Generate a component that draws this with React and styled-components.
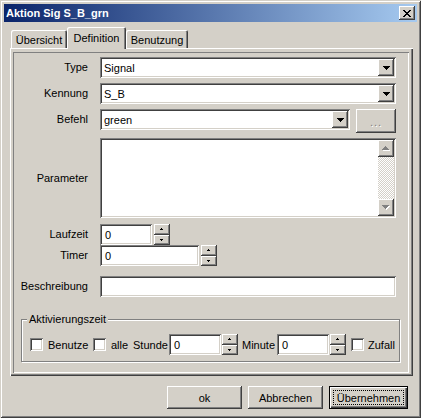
import React from "react";
import styled, { createGlobalStyle, css } from "styled-components";

const FACE = "#d4d0c8";

const raisedEdge = css`
  box-shadow: inset -1px -1px #404040, inset 1px 1px #ffffff, inset -2px -2px #808080;
`;

const sunkenEdge = css`
  box-shadow: inset 1px 1px #808080, inset -1px -1px #ffffff, inset 2px 2px #404040,
    inset -2px -2px ${FACE};
`;

const GlobalStyle = createGlobalStyle`
  html, body {
    margin: 0;
    padding: 0;
    background: ${FACE};
  }
  body {
    font-family: "Liberation Sans", Arial, sans-serif;
    font-size: 11px;
    color: #000;
  }
  * {
    box-sizing: border-box;
  }
`;

const Window = styled.div`
  width: 421px;
  height: 418px;
  padding: 4px;
  background: ${FACE};
  display: flex;
  flex-direction: column;
  box-shadow: inset 1px 1px ${FACE}, inset -1px -1px #404040, inset 2px 2px #fff,
    inset -2px -2px #808080;
`;

const TitleBar = styled.div`
  height: 18px;
  flex-shrink: 0;
  display: flex;
  align-items: center;
  justify-content: space-between;
  padding: 0 2px;
  background: linear-gradient(to right, #0a246a, #a6caf0);
  color: #fff;
  font-weight: bold;
  white-space: nowrap;
`;

const CloseButton = styled.div`
  width: 16px;
  height: 14px;
  background: ${FACE};
  ${raisedEdge};
  display: flex;
  align-items: center;
  justify-content: center;
  padding-right: 1px;
`;

const Client = styled.div`
  flex: 1;
  display: flex;
  flex-direction: column;
  padding: 5px 4px 0 6px;
`;

const TabStrip = styled.div`
  height: 21px;
  display: flex;
  align-items: flex-end;
  padding-left: 1px;
`;

const Tab = styled.div`
  position: relative;
  z-index: ${(p) => (p.$active ? 1 : 0)};
  width: ${(p) => p.$w}px;
  height: ${(p) => (p.$active ? 22 : 18)}px;
  margin-bottom: ${(p) => (p.$active ? -1 : 0)}px;
  padding-top: ${(p) => (p.$active ? 4 : 3)}px;
  line-height: 14px;
  text-align: center;
  background: ${FACE};
  border-radius: 2px 2px 0 0;
  box-shadow: inset 1px 1px #fff, inset -1px 0 #404040, inset -2px 0 #808080;
  white-space: nowrap;
`;

const TabPanel = styled.div`
  height: 328px;
  display: flex;
  padding: 4px 4px 3px 3px;
  box-shadow: inset 1px 1px #fff, inset -1px -1px #404040, inset -2px -2px #808080;
`;

const PagePanel = styled.div`
  flex: 1;
  display: flex;
  flex-direction: column;
  box-shadow: inset 1px 1px #808080, inset -1px -1px #fff;
`;

const Row = styled.div`
  display: flex;
  align-items: ${(p) => p.$align || "center"};
  margin-top: ${(p) => p.$mt}px;
  padding: 0 13px 0 2px;
`;

const Label = styled.div`
  width: 73px;
  margin-right: 12px;
  flex-shrink: 0;
  text-align: right;
  line-height: 21px;
  white-space: nowrap;
  align-self: ${(p) => (p.$middle ? "center" : "flex-start")};
`;

const Edit = styled.div`
  height: 21px;
  width: ${(p) => (p.$w ? `${p.$w}px` : "auto")};
  flex: ${(p) => (p.$w ? "none" : 1)};
  display: flex;
  align-items: center;
  padding: 0 2px 0 5px;
  background: #fff;
  ${sunkenEdge};
  white-space: nowrap;
`;

const Combo = styled.div`
  height: 21px;
  flex: 1;
  display: flex;
  align-items: center;
  padding: 2px 2px 2px 4px;
  background: #fff;
  ${sunkenEdge};
`;

const ComboText = styled.span`
  flex: 1;
`;

const DropButton = styled.div`
  width: 16px;
  height: 17px;
  background: ${FACE};
  ${raisedEdge};
  display: flex;
  align-items: center;
  justify-content: center;
  padding-top: 1px;
`;

const EllipsisButton = styled.div`
  width: 40px;
  height: 24px;
  margin-left: 6px;
  background: ${FACE};
  ${raisedEdge};
  display: flex;
  align-items: flex-end;
  justify-content: center;
  padding-bottom: 5px;
  color: #808080;
  text-shadow: 1px 1px #fff;
  letter-spacing: 1px;
`;

const Memo = styled.div`
  flex: 1;
  height: 80px;
  display: flex;
  justify-content: flex-end;
  padding: 2px;
  background: #fff;
  ${sunkenEdge};
`;

const ScrollBar = styled.div`
  width: 16px;
  display: flex;
  flex-direction: column;
`;

const ScrollButton = styled.div`
  height: 17px;
  background: ${FACE};
  ${raisedEdge};
  display: flex;
  align-items: center;
  justify-content: center;
`;

const ScrollTrack = styled.div`
  flex: 1;
  background: repeating-conic-gradient(#ffffff 0 25%, ${FACE} 0 50%) 0 0 / 2px 2px;
`;

const Spin = styled.div`
  width: 16px;
  height: 21px;
  margin-left: ${(p) => p.$ml}px;
  display: flex;
  flex-direction: column;
  flex-shrink: 0;
`;

const SpinHalf = styled.div`
  flex: 1;
  background: ${FACE};
  ${raisedEdge};
  display: flex;
  align-items: center;
  justify-content: center;
  padding-right: 1px;
`;

const Group = styled.fieldset`
  margin: 16px 9px 0 8px;
  padding: 8px 0 6px 8px;
  min-width: 0;
  border: 1px solid #808080;
  box-shadow: inset 1px 1px #fff, 1px 1px #fff;
`;

const Caption = styled.legend`
  margin-left: -3px;
  padding: 0 2px;
  line-height: 13px;
  background: ${FACE};
`;

const GroupRow = styled.div`
  height: 21px;
  display: flex;
  align-items: center;
`;

const CheckBox = styled.div`
  width: 13px;
  height: 13px;
  flex-shrink: 0;
  margin-left: ${(p) => p.$ml || 0}px;
  background: #fff;
  ${sunkenEdge};
`;

const GroupText = styled.span`
  width: ${(p) => p.$w}px;
  margin-left: ${(p) => p.$ml}px;
  flex-shrink: 0;
  white-space: nowrap;
`;

const ButtonRow = styled.div`
  display: flex;
  justify-content: flex-end;
  gap: 6px;
  margin-top: 10px;
  padding-right: 5px;
`;

const Button = styled.button`
  position: relative;
  width: ${(p) => p.$w}px;
  height: 23px;
  padding: 0;
  border: none;
  background: ${FACE};
  font: inherit;
  color: #000;
  ${(p) =>
    p.$default
      ? css`
          box-shadow: inset 0 0 0 1px #000, inset 2px 2px #fff, inset -2px -2px #404040,
            inset -3px -3px #808080;
          &::after {
            content: "";
            position: absolute;
            inset: 4px;
            border: 1px dotted #000;
          }
        `
      : raisedEdge};
`;

const pix = (rows) =>
  rows
    .map(([x, y, w]) => `M${x} ${y}h${w}v1H${x}z`)
    .join(" ");

const CloseGlyph = () => (
  <svg width="8" height="7" viewBox="0 0 8 7" shapeRendering="crispEdges">
    <path
      fill="#000"
      d={pix([
        [0, 0, 2], [6, 0, 2],
        [1, 1, 2], [5, 1, 2],
        [2, 2, 4],
        [3, 3, 2],
        [2, 4, 4],
        [1, 5, 2], [5, 5, 2],
        [0, 6, 2], [6, 6, 2],
      ])}
    />
  </svg>
);

const DownArrow = () => (
  <svg width="7" height="4" viewBox="0 0 7 4" shapeRendering="crispEdges">
    <path fill="#000" d={pix([[0, 0, 7], [1, 1, 5], [2, 2, 3], [3, 3, 1]])} />
  </svg>
);

const GrayArrow = ({ up }) => {
  const rows = up
    ? [[3, 0, 1], [2, 1, 3], [1, 2, 5], [0, 3, 7]]
    : [[0, 0, 7], [1, 1, 5], [2, 2, 3], [3, 3, 1]];
  const shade = rows.map(([x, y, w]) => [x + 1, y + 1, w]);
  return (
    <svg width="8" height="5" viewBox="0 0 8 5" shapeRendering="crispEdges">
      <path fill="#fff" d={pix(shade)} />
      <path fill="#808080" d={pix(rows)} />
    </svg>
  );
};

const TinyArrow = ({ up }) => (
  <svg width="3" height="2" viewBox="0 0 3 2" shapeRendering="crispEdges">
    <path fill="#000" d={up ? pix([[1, 0, 1], [0, 1, 3]]) : pix([[0, 0, 3], [1, 1, 1]])} />
  </svg>
);

const SpinButtons = ({ ml }) => (
  <Spin $ml={ml}>
    <SpinHalf>
      <TinyArrow up />
    </SpinHalf>
    <SpinHalf>
      <TinyArrow />
    </SpinHalf>
  </Spin>
);

const ComboBox = ({ value }) => (
  <Combo>
    <ComboText>{value}</ComboText>
    <DropButton>
      <DownArrow />
    </DropButton>
  </Combo>
);

export default function App() {
  return (
    <>
      <GlobalStyle />
      <Window>
        <TitleBar>
          <span>Aktion Sig S_B_grn</span>
          <CloseButton>
            <CloseGlyph />
          </CloseButton>
        </TitleBar>

        <Client>
          <TabStrip>
            <Tab $w={56}>Übersicht</Tab>
            <Tab $w={59} $active>
              Definition
            </Tab>
            <Tab $w={62}>Benutzung</Tab>
          </TabStrip>

          <TabPanel>
            <PagePanel>
              <Row $mt={5}>
                <Label>Type</Label>
                <ComboBox value="Signal" />
              </Row>
              <Row $mt={5}>
                <Label>Kennung</Label>
                <ComboBox value="S_B" />
              </Row>
              <Row $mt={5} $align="flex-start">
                <Label>Befehl</Label>
                <ComboBox value="green" />
                <EllipsisButton>...</EllipsisButton>
              </Row>
              <Row $mt={5}>
                <Label $middle>Parameter</Label>
                <Memo>
                  <ScrollBar>
                    <ScrollButton>
                      <GrayArrow up />
                    </ScrollButton>
                    <ScrollTrack />
                    <ScrollButton>
                      <GrayArrow />
                    </ScrollButton>
                  </ScrollBar>
                </Memo>
              </Row>
              <Row $mt={6}>
                <Label>Laufzeit</Label>
                <Edit $w={52}>0</Edit>
                <SpinButtons ml={2} />
              </Row>
              <Row $mt={0}>
                <Label>Timer</Label>
                <Edit $w={99}>0</Edit>
                <SpinButtons ml={2} />
              </Row>
              <Row $mt={10}>
                <Label>Beschreibung</Label>
                <Edit />
              </Row>

              <Group>
                <Caption>Aktivierungszeit</Caption>
                <GroupRow>
                  <CheckBox />
                  <GroupText $w={45} $ml={5}>
                    Benutze
                  </GroupText>
                  <CheckBox />
                  <GroupText $w={22} $ml={5}>
                    alle
                  </GroupText>
                  <GroupText $w={36} $ml={0}>
                    Stunde
                  </GroupText>
                  <Edit $w={52}>0</Edit>
                  <SpinButtons ml={1} />
                  <GroupText $w={35} $ml={4}>
                    Minute
                  </GroupText>
                  <Edit $w={52}>0</Edit>
                  <SpinButtons ml={1} />
                  <CheckBox $ml={5} />
                  <GroupText $w={28} $ml={4}>
                    Zufall
                  </GroupText>
                </GroupRow>
              </Group>
            </PagePanel>
          </TabPanel>

          <ButtonRow>
            <Button $w={75}>ok</Button>
            <Button $w={75}>Abbrechen</Button>
            <Button $w={79} $default>
              Übernehmen
            </Button>
          </ButtonRow>
        </Client>
      </Window>
    </>
  );
}
